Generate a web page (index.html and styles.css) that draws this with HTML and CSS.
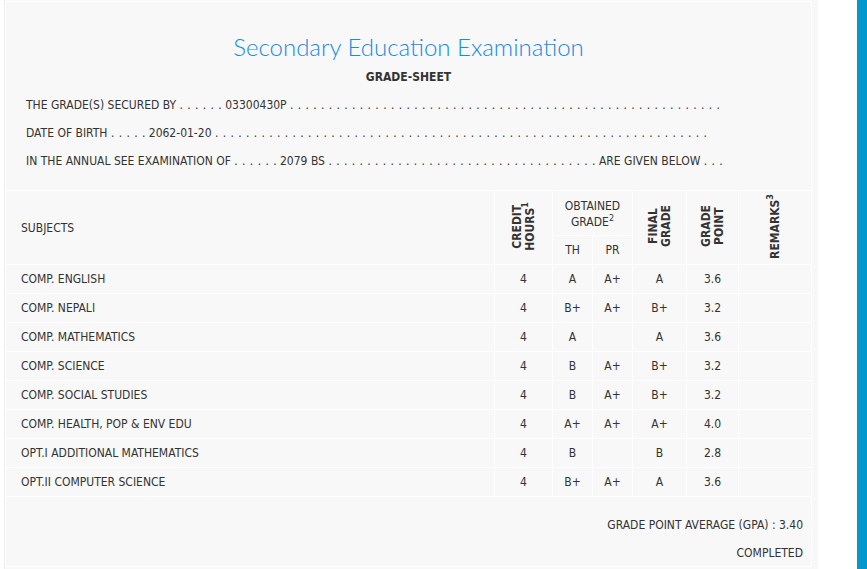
FILE: index.html
```html
<!DOCTYPE html>
<html lang="en">
<head>
<meta charset="utf-8">
<title>Grade Sheet</title>
<link rel="stylesheet" href="styles.css">
</head>
<body>
<div class="page">
  <main class="panel">
    <section class="head-box">
      <h1 class="title">Secondary Education Examination</h1>
      <h2 class="subtitle">GRADE-SHEET</h2>
      <p class="info">THE GRADE(S) SECURED BY <span class="dots">. . . . . .</span> 03300430P <span class="dots">. . . . . . . . . . . . . . . . . . . . . . . . . . . . . . . . . . . . . . . . . . . . . . . . . . . . . . . .</span></p>
      <p class="info">DATE OF BIRTH <span class="dots">. . . . .</span> 2062-01-20 <span class="dots">. . . . . . . . . . . . . . . . . . . . . . . . . . . . . . . . . . . . . . . . . . . . . . . . . . . . . . . . . . . . . . . .</span></p>
      <p class="info">IN THE ANNUAL SEE EXAMINATION OF <span class="dots">. . . . . .</span> 2079 BS <span class="dots">. . . . . . . . . . . . . . . . . . . . . . . . . . . . . . . . . . .</span> ARE GIVEN BELOW <span class="dots">. . .</span></p>
    </section>
    <table class="grades">
      <colgroup>
        <col class="c-subj">
        <col class="c-cr">
        <col class="c-th">
        <col class="c-pr">
        <col class="c-fg">
        <col class="c-gp">
        <col class="c-rm">
      </colgroup>
      <thead>
        <tr class="hr1">
          <th rowspan="2" class="subj-h">SUBJECTS</th>
          <th rowspan="2" class="bold"><span class="vert">CREDIT<br>HOURS<sup>1</sup></span></th>
          <th colspan="2" class="obt">OBTAINED<br>GRADE<sup>2</sup></th>
          <th rowspan="2" class="bold"><span class="vert">FINAL<br>GRADE</span></th>
          <th rowspan="2" class="bold"><span class="vert">GRADE<br>POINT</span></th>
          <th rowspan="2" class="bold"><span class="vert">REMARKS<sup>3</sup></span></th>
        </tr>
        <tr class="hr2">
          <th>TH</th>
          <th>PR</th>
        </tr>
      </thead>
      <tbody>
        <tr><td class="subj">COMP. ENGLISH</td><td>4</td><td>A</td><td>A+</td><td>A</td><td>3.6</td><td></td></tr>
        <tr><td class="subj">COMP. NEPALI</td><td>4</td><td>B+</td><td>A+</td><td>B+</td><td>3.2</td><td></td></tr>
        <tr><td class="subj">COMP. MATHEMATICS</td><td>4</td><td>A</td><td></td><td>A</td><td>3.6</td><td></td></tr>
        <tr><td class="subj">COMP. SCIENCE</td><td>4</td><td>B</td><td>A+</td><td>B+</td><td>3.2</td><td></td></tr>
        <tr><td class="subj">COMP. SOCIAL STUDIES</td><td>4</td><td>B</td><td>A+</td><td>B+</td><td>3.2</td><td></td></tr>
        <tr><td class="subj">COMP. HEALTH, POP &amp; ENV EDU</td><td>4</td><td>A+</td><td>A+</td><td>A+</td><td>4.0</td><td></td></tr>
        <tr><td class="subj">OPT.I ADDITIONAL MATHEMATICS</td><td>4</td><td>B</td><td></td><td>B</td><td>2.8</td><td></td></tr>
        <tr><td class="subj">OPT.II COMPUTER SCIENCE</td><td>4</td><td>B+</td><td>A+</td><td>A</td><td>3.6</td><td></td></tr>
      </tbody>
    </table>
    <section class="gpa-box">
      <p class="gpa">GRADE POINT AVERAGE (GPA) : 3.40</p>
      <p class="gpa">COMPLETED</p>
    </section>
  </main>
  <aside class="sidebar"></aside>
</div>
</body>
</html>
```
FILE: styles.css
```css
html, body {
  margin: 0;
  padding: 0;
  background: #ffffff;
}

body {
  font-family: "DejaVu Sans Condensed", "DejaVu Sans", sans-serif;
  font-size: 12px;
  color: #333333;
}

.page {
  display: flex;
  height: 569px;
  overflow: hidden;
}

.panel {
  width: 814px;
  margin-left: 4px;
  border-left: 1px solid #efefef;
  padding-top: 1px;
  padding-right: 7px;
  background: #f8f8f8;
  box-sizing: border-box;
  flex: none;
}

.sidebar {
  width: 10px;
  margin-left: auto;
  background: #0098cf;
}

.head-box {
  width: 807px;
  box-sizing: border-box;
  border: 1px solid #ffffff;
  border-bottom: none;
  height: 189px;
  padding: 0 20px;
  display: flex;
  flex-direction: column;
}

.title {
  margin: 31px 0 0;
  font-family: "Lato", sans-serif;
  font-weight: 300;
  font-size: 24px;
  line-height: 28px;
  color: #1a8ae2;
  text-align: center;
}

.subtitle {
  margin: 8px 0 6px;
  font-size: 12px;
  line-height: 16px;
  font-weight: bold;
  text-align: center;
  color: #333333;
}

.info {
  margin: 0;
  line-height: 28px;
  white-space: nowrap;
}

.dots {
  word-spacing: 0.9px;
}

.grades {
  width: 807px;
  border-collapse: collapse;
  table-layout: fixed;
  border: 1px solid #ffffff;
}

.grades th,
.grades td {
  border: 1px solid #ffffff;
  padding: 0;
  text-align: center;
  vertical-align: middle;
  font-weight: normal;
}

.c-subj { width: 489px; }
.c-cr { width: 58px; }
.c-th { width: 40px; }
.c-pr { width: 40px; }
.c-fg { width: 54px; }
.c-gp { width: 52px; }
.c-rm { width: 73px; }

.hr1 { height: 45px; }
.hr2 { height: 29px; }
.grades tbody tr { height: 29px; }

.grades .subj,
.grades .subj-h {
  text-align: left;
  padding-left: 15px;
}

.grades .bold {
  font-weight: bold;
  line-height: 14px;
}

.grades .obt {
  line-height: 16px;
  padding-top: 2px;
}

.vert {
  display: inline-block;
  writing-mode: vertical-rl;
  transform: rotate(180deg);
  text-align: center;
  line-height: 13px;
}

sup {
  font-size: 9px;
  line-height: 0;
  vertical-align: 5px;
}

.gpa-box {
  width: 807px;
  box-sizing: border-box;
  border: 1px solid #ffffff;
  border-top: none;
  height: 70px;
  padding: 14px 8px 0 0;
}

.gpa {
  margin: 0;
  text-align: right;
  line-height: 28px;
}
```
